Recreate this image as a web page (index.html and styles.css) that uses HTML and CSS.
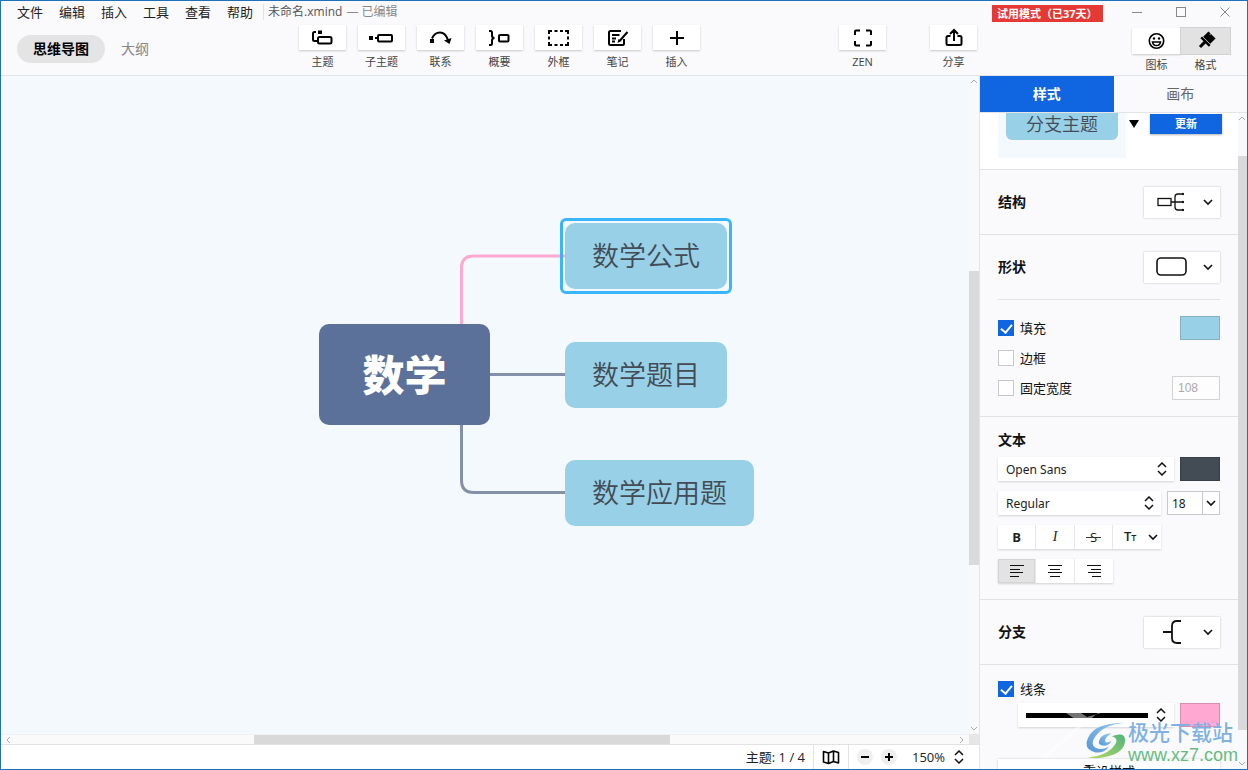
FILE: index.html
```html
<!DOCTYPE html>
<html lang="zh-CN">
<head>
<meta charset="utf-8">
<title>未命名.xmind</title>
<link rel="stylesheet" href="styles.css">
</head>
<body>
<div class="app">
  <header class="header">
    <div class="header-main">
      <div class="menubar">
        <nav class="menus">
          <button class="menu">文件</button>
          <button class="menu">编辑</button>
          <button class="menu">插入</button>
          <button class="menu">工具</button>
          <button class="menu">查看</button>
          <button class="menu">帮助</button>
        </nav>
        <div class="doc-title"><span>未命名.xmind</span><span class="doc-state">— 已编辑</span></div>
      </div>
      <div class="toolbar">
        <div class="view-tabs">
          <button class="view-tab view-tab-on">思维导图</button>
          <button class="view-tab">大纲</button>
        </div>
        <div class="tools">
          <button class="tool"><span class="tool-face"><svg class="icon" width="24" height="24" viewBox="0 0 24 24"><path d="M5 6H3.500Q2 6 2 7.500V13.500Q2 15 3.500 15H6" class="s2"/><rect x="7" y="11" width="13.500" height="6.500" rx="1.500" class="s2"/><rect x="7" y="4.500" width="4" height="3.500"/></svg></span><span>主题</span></button>
          <button class="tool"><span class="tool-face"><svg class="icon" width="24" height="24" viewBox="0 0 24 24"><rect x="-1" y="10" width="4" height="4"/><path d="M5 12h4" class="s2"/><rect x="8" y="9" width="14" height="6.500" rx="1" class="s2"/></svg></span><span>子主题</span></button>
          <button class="tool"><span class="tool-face"><svg class="icon" width="24" height="24" viewBox="0 0 24 24"><rect x="1" y="13" width="4" height="4"/><path d="M3 12.500Q5.500 6.500 11 6.500T19 14" class="s2"/><path d="M15 14.500L22.500 12l-2 6z"/></svg></span><span>联系</span></button>
          <button class="tool"><span class="tool-face"><svg class="icon" width="24" height="24" viewBox="0 0 24 24"><path d="M1 5h1.500Q4 5 4 6.500v3Q4 12 6.500 12 4 12 4 14.500v3Q4 19 2.500 19H1" class="s2"/><rect x="11" y="9" width="9.500" height="6.500" rx="1" class="s2"/></svg></span><span>概要</span></button>
          <button class="tool"><span class="tool-face"><svg class="icon" width="24" height="24" viewBox="0 0 24 24"><path d="M2 8V5h3M7.500 5h3M13 5h3M18 5h3v3M21 10.500v3M21 16v3h-3M16 19h-3M10.500 19h-3M5 19H2v-3M2 13.500v-3" class="s2"/></svg></span><span>外框</span></button>
          <button class="tool"><span class="tool-face"><svg class="icon" width="24" height="24" viewBox="0 0 24 24"><path d="M15 5H4.500Q3 5 3 6.500v11Q3 19 4.500 19h12q1.500 0 1.500-1.500V13M6 9h7.500M6 12.500h4M6 15.500h3" class="s2"/><path d="M21.500 6l-7.500 8.500" class="s2"/><path d="M11.500 17l1-4 3 2z"/></svg></span><span>笔记</span></button>
          <button class="tool"><span class="tool-face"><svg class="icon" width="24" height="24" viewBox="0 0 24 24"><path d="M12 5v14M5 12h14" class="s2"/></svg></span><span>插入</span></button>
        </div>
        <div class="tools tools-end">
          <button class="tool"><span class="tool-face"><svg class="icon" width="24" height="24" viewBox="0 0 24 24"><path d="M4 9V5.500Q4 4.500 5 4.500h4M15 4.500h4q1 0 1 1V9M20 15v3.500q0 1-1 1h-4M9 19.500H5q-1 0-1-1V15" class="s2"/></svg></span><span>ZEN</span></button>
          <button class="tool"><span class="tool-face"><svg class="icon" width="24" height="24" viewBox="0 0 24 24"><path d="M8.500 10H6q-1.500 0-1.500 1.500v6Q4.500 19 6 19h12q1.500 0 1.500-1.500v-6Q19.500 10 18 10h-2.500M12 15V5M8 8l4-4 4 4" class="s2"/></svg></span><span>分享</span></button>
        </div>
      </div>
    </div>
    <div class="header-side">
      <div class="window-row">
        <span class="trial">试用模式（已37天）</span>
        <div class="window-buttons">
          <button class="window-button" aria-label="最小化"><svg class="win-icon" width="12" height="12"><path d="M1 6.500h10"/></svg></button>
          <button class="window-button" aria-label="最大化"><svg class="win-icon" width="12" height="12"><rect x="1.500" y="1.500" width="9" height="9"/></svg></button>
          <button class="window-button" aria-label="关闭"><svg class="win-icon" width="12" height="12"><path d="M1.500 1.500l9 9M10.500 1.500l-9 9"/></svg></button>
        </div>
      </div>
      <div class="panel-switch">
        <button class="tool panel-tool"><span class="tool-face"><svg class="icon" width="20" height="20" viewBox="0 0 20 20"><circle class="face" cx="9.500" cy="10" r="7.200"/><circle cx="7" cy="7.500" r="1.200"/><circle cx="12" cy="7.500" r="1.200"/><path class="face" d="M5.500 11h8q-.500 3.500-4 3.500t-4-3.500z"/></svg></span><span>图标</span></button>
        <button class="tool panel-tool panel-tool-on"><span class="tool-face"><svg class="icon" width="20" height="20" viewBox="0 0 20 20"><g transform="rotate(45 10 10)"><path d="M5 1.500h3v2l1-2h6V9H5z"/><path d="M4 9.500h12V12h-4.500v6.500h-3V12H4z"/></g></svg></span><span>格式</span></button>
      </div>
    </div>
  </header>

  <div class="workspace">
    <main class="editor">
      <div class="canvas-area">
        <div class="canvas">
          <svg class="links" width="600" height="440">
            <path class="link" d="M489 298.500H565"/>
            <path class="link" d="M460.500 348V404q0 12.500 12 12.500H565"/>
            <path class="link link-pink" d="M460.500 249V192q0-12 12-12H565"/>
          </svg>
          <div class="node node-root">数学</div>
          <div class="selection"></div>
          <div class="node node-a">数学公式</div>
          <div class="node node-b">数学题目</div>
          <div class="node node-c">数学应用题</div>
        </div>
        <div class="vbar">
          <svg class="arrow" width="10" height="10"><path d="M2 7l3-3 3 3"/></svg>
          <div class="vtrack"><div class="vthumb"></div></div>
          <svg class="arrow" width="10" height="10"><path d="M2 3l3 3 3-3"/></svg>
        </div>
        <div class="hbar">
          <svg class="arrow" width="16" height="10"><path d="M9 2L6 5l3 3"/></svg>
          <div class="htrack"><div class="hthumb"></div></div>
          <svg class="arrow" width="16" height="10"><path d="M7 2l3 3-3 3"/></svg>
        </div>
        <div class="corner"></div>
      </div>
      <footer class="status">
        <span class="status-count">主题: 1 / 4</span>
        <button class="status-map" aria-label="导航图"><svg class="icon" width="18" height="16"><path class="map" d="M1.500 2.500l5 1.500 5-2 5 1.500v10.500l-5-1.500-5 2-5-1.500zM6.500 4v10.500M11.500 2v10.500"/></svg></button>
        <div class="status-zoom">
          <button class="round" aria-label="缩小"><svg class="icon" width="10" height="10"><path d="M1 5h8" class="s2"/></svg></button>
          <button class="round" aria-label="放大"><svg class="icon" width="10" height="10"><path d="M1 5h8M5 1v8" class="s2"/></svg></button>
          <div class="picker zoom-picker">
            <select class="picker-field" aria-label="缩放"><option>150%</option></select>
            <svg class="updown" width="10" height="14"><path d="M1 5l4-4 4 4M1 9l4 4 4-4"/></svg>
          </div>
        </div>
      </footer>
    </main>

    <aside class="sidebar">
      <div class="side-tabs">
        <button class="side-tab side-tab-on">样式</button>
        <button class="side-tab">画布</button>
      </div>
      <div class="side-body">
        <div class="side-content">
          <section class="preview">
            <div class="preview-card"><div class="preview-topic">分支主题</div></div>
            <button class="preview-more" aria-label="更多样式"><svg width="10" height="8"><path d="M0 0h10L5 8z"/></svg></button>
            <button class="update">更新</button>
          </section>
          <section class="row-section">
            <h3 class="heading">结构</h3>
            <button class="shape-button" aria-label="结构"><svg class="thin" width="28" height="20"><rect x="2" y="6.500" width="13" height="7"/><path d="M15 10h12M27 2h-5q-3 0-3 3v10q0 3 3 3h5"/><circle class="dot" cx="27" cy="2" r=".500"/><circle class="dot" cx="27" cy="10" r=".500"/><circle class="dot" cx="27" cy="18" r=".500"/></svg><svg class="chevron" width="10" height="8"><path d="M1 2l4 4 4-4"/></svg></button>
          </section>
          <section class="shape-section">
            <div class="shape-row">
              <h3 class="heading">形状</h3>
              <button class="shape-button" aria-label="形状"><svg class="thin" width="32" height="20"><rect x="1" y="1" width="29" height="17" rx="4"/></svg><svg class="chevron" width="10" height="8"><path d="M1 2l4 4 4-4"/></svg></button>
            </div>
            <div class="checks">
              <div class="check-row"><label class="check"><input type="checkbox" class="box" checked>填充</label><button class="swatch swatch-blue" aria-label="填充颜色"></button></div>
              <div class="check-row"><label class="check"><input type="checkbox" class="box">边框</label></div>
              <div class="check-row"><label class="check"><input type="checkbox" class="box">固定宽度</label><input class="width-field" value="108" aria-label="宽度" disabled></div>
            </div>
          </section>
          <section class="text-section">
            <h3 class="heading">文本</h3>
            <div class="field-row">
              <div class="picker picker-card"><select class="picker-field" aria-label="字体"><option>Open Sans</option></select><svg class="updown" width="10" height="14"><path d="M1 5l4-4 4 4M1 9l4 4 4-4"/></svg></div>
              <button class="swatch swatch-dark" aria-label="文字颜色"></button>
            </div>
            <div class="field-row">
              <div class="picker picker-card"><select class="picker-field" aria-label="字重"><option>Regular</option></select><svg class="updown" width="10" height="14"><path d="M1 5l4-4 4 4M1 9l4 4 4-4"/></svg></div>
              <div class="size-box"><input class="size-field" value="18" aria-label="字号"><button class="size-more" aria-label="选择字号"><svg class="chevron" width="10" height="8"><path d="M1 2l4 4 4-4"/></svg></button></div>
            </div>
            <div class="segments">
              <button class="segment bold">B</button><button class="segment italic">I</button><button class="segment strike">S</button><button class="segment segment-wide"><span class="caps">T<small class="caps-small">T</small></span><svg class="chevron" width="10" height="8"><path d="M1 2l4 4 4-4"/></svg></button>
            </div>
            <div class="segments">
              <button class="segment segment-on" aria-label="左对齐"><svg class="lines" width="16" height="12"><path d="M1 .500h14M1 4.500h10M1 7.500h13M1 11.500h9"/></svg></button><button class="segment" aria-label="居中"><svg class="lines" width="16" height="12"><path d="M1 .500h14M3 4.500h10M1 7.500h14M3 11.500h10"/></svg></button><button class="segment" aria-label="右对齐"><svg class="lines" width="16" height="12"><path d="M1 .500h14M5 4.500h10M2 7.500h13M6 11.500h9"/></svg></button>
            </div>
          </section>
          <section class="row-section">
            <h3 class="heading">分支</h3>
            <button class="shape-button" aria-label="分支"><svg class="thin branch-icon" width="28" height="24"><path d="M7 12h9M25 1h-4q-5 0-5 5v12q0 5 5 5h4"/></svg><svg class="chevron" width="10" height="8"><path d="M1 2l4 4 4-4"/></svg></button>
          </section>
          <section class="line-section">
            <label class="check"><input type="checkbox" class="box" checked>线条</label>
            <div class="line-row">
              <button class="line-picker" aria-label="线条粗细"><span class="line-sample"></span><svg class="updown" width="10" height="14"><path d="M1 5l4-4 4 4M1 9l4 4 4-4"/></svg></button>
              <button class="swatch swatch-pink" aria-label="线条颜色"></button>
            </div>
            <button class="reset">重设样式</button>
          </section>
        </div>
        <div class="side-bar">
          <svg class="arrow" width="9" height="10"><path d="M1 7l3-3 3 3"/></svg>
          <div class="side-track"><div class="side-thumb"></div></div>
          <svg class="arrow" width="9" height="10"><path d="M1 3l3 3 3-3"/></svg>
        </div>
      </div>
    </aside>
  </div>

  <div class="watermark">
    <svg class="mark-streak" width="70" height="50"><path d="M22 0h15l9 6L67 0h-8L8 44 0 48 40 12z"/></svg>
    <svg class="mark-logo" width="42" height="40" viewBox="0 0 44 40">
      <defs>
        <linearGradient id="sky" x1="0" y1="1" x2="1" y2="0"><stop offset="0" stop-color="#3b86d0"/><stop offset="1" stop-color="#8cc4ec"/></linearGradient>
        <linearGradient id="leaf" x1="0" y1="1" x2="1" y2="0"><stop offset="0" stop-color="#a9d34c"/><stop offset="1" stop-color="#35a864"/></linearGradient>
      </defs>
      <path fill="url(#sky)" d="M42 1Q10 1 3 17q-5 12 8 15 9 1 14-6-8 4-14 1-6-4 0-12Q20 3 42 1z"/>
      <path fill="url(#sky)" d="M28 12q-10 0-13 7-2 6 5 6 5 0 8-5-7 3-7 0 0-4 7-8z"/>
      <path fill="url(#leaf)" d="M28 15q14-5 14 4 0 14-22 18-10 2-17 0 21-1 29-14 3-6-4-8z"/>
    </svg>
    <div class="mark-text"><span class="mark-name">极光下载站</span><span class="mark-url">www.xz7.com</span></div>
  </div>
</div>
</body>
</html>
```
FILE: styles.css
```css
* { box-sizing: border-box; }

body {
  margin: 0;
  font: 13px/18px "Open Sans", "Noto Sans CJK SC", sans-serif;
  color: #222;
}

button, input, select {
  font: inherit;
  color: inherit;
  margin: 0;
  padding: 0;
  border: 0;
  background: none;
}

svg { display: block; flex: none; }

.icon { fill: #000; overflow: visible; }
.s2 { fill: none; stroke: #000; stroke-width: 2; }
.face { fill: none; stroke: #000; stroke-width: 1.600; }
.map { fill: none; stroke: #000; stroke-width: 1.600; stroke-linejoin: round; }

.app {
  position: relative;
  display: flex;
  flex-direction: column;
  height: 100vh;
  border: 1px solid #1f72b8;
  background: #fafafd;
  overflow: hidden;
}

/* Header */
.header {
  display: flex;
  flex: none;
  border-bottom: 1px solid #dfe5ea;
}
.header-main { flex: 1; min-width: 0; }
.header-side { flex: none; width: 268px; }

.menubar {
  display: flex;
  align-items: center;
  height: 22px;
  padding-left: 16px;
}
.menus { display: flex; gap: 16px; padding-right: 10px; }
.doc-title {
  display: flex;
  gap: 4px;
  padding-left: 4px;
  border-left: 1px solid #e2e2e2;
  font-size: 12px;
  line-height: 16px;
  color: #555;
}
.doc-state { color: #888; }

.toolbar { display: flex; align-items: flex-start; padding: 2px 2px 4px 16px; }
.view-tabs {
  display: flex;
  align-items: center;
  flex: none;
  width: 282px;
  padding-top: 10px;
}
.view-tab {
  height: 28px;
  padding: 0 16px;
  border-radius: 14px;
  font-size: 14px;
  color: #888;
}
.view-tab-on {
  background: #e4e4e5;
  color: #000;
  font-weight: 700;
}
.tools { display: flex; gap: 12px; }
.tools-end { gap: 44px; margin-left: auto; }
.tool {
  display: flex;
  flex-direction: column;
  align-items: center;
  gap: 3px;
  width: 47px;
  font-size: 11px;
  color: #444;
}
.tool-face {
  display: flex;
  align-items: center;
  justify-content: center;
  width: 100%;
  height: 25px;
  background: #fff;
  box-shadow: 0 1px 2px rgba(0, 0, 0, .2);
}

.window-row { display: flex; height: 22px; padding: 4px 16px 0 13px; }
.trial {
  height: 17px;
  padding-left: 5px;
  width: 111px;
  background: #e53935;
  color: #fff;
  font-size: 11px;
  font-weight: 700;
  line-height: 17px;
  white-space: nowrap;
  overflow: hidden;
}
.window-buttons { display: flex; gap: 32px; margin-left: auto; height: 14px; align-items: center; }
.win-icon { fill: none; stroke: #888; }

.panel-switch { display: flex; justify-content: flex-end; padding: 5px 17px 0 0; }
.panel-tool { width: 49px; gap: 2px; }
.panel-tool .tool-face { height: 26px; }
.panel-tool-on .tool-face { background: #e2e2e2; box-shadow: 0 0 0 1px #d2d2d2; }

/* Workspace */
.workspace { display: flex; flex: 1; min-height: 0; }
.editor { display: flex; flex-direction: column; flex: 1; min-width: 0; }
.canvas-area {
  display: grid;
  grid-template: minmax(0, 1fr) 10px / minmax(0, 1fr) 10px;
  flex: 1;
  min-height: 0;
}
.canvas { position: relative; overflow: hidden; background: #f4f9fe; }

.links { position: absolute; left: 0; top: 0; }
.link { fill: none; stroke: #8390a8; stroke-width: 3; }
.link-pink { stroke: #ffa8d2; }
.node {
  position: absolute;
  left: 564px;
  width: 162px;
  height: 66px;
  border-radius: 10px;
  background: #97d0e7;
  color: #434b54;
  font-family: "Noto Sans CJK SC", sans-serif;
  font-size: 27px;
  font-weight: 350;
  line-height: 64px;
  text-align: center;
}
.node-root {
  left: 318px;
  top: 248px;
  width: 171px;
  height: 101px;
  background: #5b7199;
  color: #fff;
  font-size: 42px;
  font-weight: 900;
  line-height: 98px;
}
.node-a { top: 147px; }
.node-b { top: 266px; }
.node-c { top: 384px; width: 189px; }
.selection {
  position: absolute;
  left: 559px;
  top: 142px;
  width: 172px;
  height: 76px;
  border: 3px solid #39b5fb;
  border-radius: 6px;
}

.arrow { fill: none; stroke: #aaa; }
.vbar, .side-bar { display: flex; flex-direction: column; background: #f8f9fb; }
.vtrack, .side-track { flex: 1; min-height: 0; }
.vtrack { padding-top: 185px; }
.vthumb { height: 294px; background: #dadada; }
.hbar { display: flex; background: #fafafa; border-top: 1px solid #eef2f5; }
.htrack { flex: 1; padding-left: 237px; }
.hthumb { width: 416px; height: 10px; background: #d9d9d9; }
.corner { background: #e6e6e6; }

.status {
  display: flex;
  align-items: stretch;
  flex: none;
  height: 25px;
  border-top: 1px solid #e2e2e2;
  background: #fff;
  justify-content: flex-end;
}
.status-count { padding: 3px 8px 0 0; }
.status-map { padding: 0 8px; border: 1px solid #e2e2e2; border-width: 0 1px; }
.status-zoom { display: flex; align-items: center; gap: 8px; padding: 0 8px; }
.round {
  display: flex;
  align-items: center;
  justify-content: center;
  width: 16px;
  height: 16px;
  border-radius: 50%;
  background: #efefef;
}

/* Pickers */
.picker { display: flex; align-items: center; justify-content: flex-end; position: relative; }
.picker .updown { position: absolute; right: 7px; pointer-events: none; }
.picker-field { appearance: none; width: 100%; height: 24px; outline: 0; }
.picker-card { flex: 1; background: #fff; box-shadow: 0 1px 2px rgba(0, 0, 0, .16); }
.picker-card .picker-field { padding-left: 8px; font: 12px "Noto Sans", sans-serif; }
.zoom-picker { width: 60px; margin-left: 6px; }
.zoom-picker .picker-field { padding-left: 1px; }
.updown { fill: none; stroke: #111; stroke-width: 1.500; }
.chevron { fill: none; stroke: #111; stroke-width: 1.600; }

/* Sidebar */
.sidebar {
  display: flex;
  flex-direction: column;
  flex: none;
  width: 268px;
  border-left: 1px solid #e2e4e8;
}
.side-tabs { display: flex; flex: none; height: 37px; border-bottom: 1px solid #e2e4e8; }
.side-tab { flex: 1; font-size: 14px; color: #666; }
.side-tab-on { background: #1065e0; color: #fff; font-weight: 700; }
.side-body { display: flex; flex: 1; min-height: 0; }
.side-content { flex: 1; min-width: 0; overflow: hidden; }
.side-bar { width: 9px; }
.side-track { padding-top: 33px; }
.side-thumb { height: 574px; background: #d9d9dc; }

.preview {
  display: flex;
  align-items: flex-end;
  height: 57px;
  padding: 0 16px 11px 18px;
  border-bottom: 1px solid #e2e2e2;
  background: #fff;
  overflow: hidden;
}
.preview-card { width: 128px; padding: 18px 8px; background: #f4f9fe; }
.preview-topic {
  height: 32px;
  border-radius: 6px;
  background: #97d0e7;
  color: #434b54;
  font-family: "Noto Sans CJK SC", sans-serif;
  font-size: 18px;
  font-weight: 350;
  line-height: 30px;
  text-align: center;
}
.preview-more { align-self: flex-start; padding: 7px 0 0 3px; }
.update {
  align-self: flex-start;
  width: 72px;
  height: 20px;
  margin: 1px 0 0 auto;
  background: #1065e0;
  box-shadow: 0 1px 2px rgba(0, 0, 0, .3);
  color: #fff;
  font-size: 11px;
  font-weight: 700;
}

.heading { margin: 0; font-size: 14px; line-height: 20px; color: #111; }
.row-section, .shape-row { display: flex; align-items: center; justify-content: space-between; }
.row-section { height: 65px; padding: 0 18px; border-bottom: 1px solid #e2e2e2; }
.shape-button {
  display: flex;
  align-items: center;
  justify-content: space-between;
  width: 76px;
  height: 31px;
  padding: 0 7px 0 12px;
  background: #fff;
  box-shadow: 0 0 2px rgba(0, 0, 0, .25);
}
.thin { fill: none; stroke: #111; stroke-width: 1.600; }
.row-section .thin { stroke-width: 1.300; }
.row-section .branch-icon { stroke-width: 1.800; }
.dot { fill: #111; }

.shape-section { padding: 0 18px 13px; border-bottom: 1px solid #e2e2e2; }
.shape-row { height: 65px; border-bottom: 1px solid #e2e2e2; }
.checks { padding-top: 13px; }
.check-row { display: flex; align-items: center; justify-content: space-between; height: 30px; }
.check { display: flex; align-items: center; gap: 6px; color: #111; }
.box {
  appearance: none;
  display: flex;
  align-items: center;
  justify-content: center;
  flex: none;
  width: 16px;
  height: 16px;
  border: 1px solid #c8c8cc;
  background: #fff;
}
.box:checked { border-color: #1065e0; background: #1065e0; }
.box:checked::after {
  content: "";
  width: 5px;
  height: 9px;
  margin-bottom: 2px;
  border: solid #fff;
  border-width: 0 2px 2px 0;
  transform: rotate(40deg);
}
.swatch { flex: none; width: 40px; height: 24px; border: 1px solid rgba(0, 0, 0, .15); }
.swatch-blue { background: #97d0e7; }
.swatch-dark { background: #434b54; }
.swatch-pink { background: #ffa8d2; }
.width-field {
  width: 48px;
  height: 24px;
  padding-left: 5px;
  border: 1px solid #d2d2d4;
  background: #fdfdfe;
  color: #aaa;
  font: 12px "Liberation Sans", sans-serif;
}

.text-section {
  display: flex;
  flex-direction: column;
  gap: 10px;
  padding: 13px 18px 16px;
  border-bottom: 1px solid #e2e2e2;
}
.text-section .heading { margin-bottom: -3px; }
.field-row { display: flex; gap: 6px; }
.size-box { display: flex; width: 53px; height: 24px; border: 1px solid #c8c8c8; background: #fff; }
.size-field { flex: 1; min-width: 0; padding-left: 4px; font: 12px "Noto Sans", sans-serif; }
.size-more { width: 17px; padding-left: 3px; border-left: 1px solid #c8c8c8; }
.segments { display: flex; align-self: flex-start; background: #fff; box-shadow: 0 1px 2px rgba(0, 0, 0, .16); }
.segment {
  display: flex;
  align-items: center;
  justify-content: center;
  width: 38px;
  height: 24px;
  border-right: 1px solid #e8e8e8;
  font-size: 13px;
}
.segment:nth-child(2) { width: 39px; }
.segment:last-child { border-right: 0; }
.segment-wide { justify-content: space-between; width: 48px; padding: 0 3px 0 11px; }
.segment-on { background: #e3e3e4; box-shadow: inset 0 0 0 1px #d4d4d4; }
.bold { font-weight: 700; }
.italic { font-family: "Liberation Serif", serif; font-size: 14px; font-style: italic; }
.strike { position: relative; }
.strike::after {
  content: "";
  position: absolute;
  left: 11px;
  right: 11px;
  top: 12px;
  height: 1px;
  background: #333;
}
.caps { font-weight: 600; }
.caps-small { font-size: 9px; }
.lines { fill: none; stroke: #111; }

.line-section { padding: 15px 18px 0; }
.line-row { display: flex; gap: 6px; padding: 5px 0 32px 20px; }
.line-picker {
  display: flex;
  align-items: center;
  flex: 1;
  gap: 8px;
  height: 24px;
  padding: 0 8px;
  background: #fff;
  box-shadow: 0 1px 2px rgba(0, 0, 0, .16);
}
.line-sample { flex: 1; height: 5px; background: #000; }
.reset {
  display: block;
  width: 100%;
  height: 24px;
  background: #fff;
  box-shadow: 0 0 2px rgba(0, 0, 0, .2);
  color: #111;
}

/* Watermark */
.watermark {
  position: absolute;
  right: 9px;
  bottom: 4px;
  display: flex;
  align-items: flex-start;
  pointer-events: none;
}
.mark-streak { position: absolute; left: -44px; top: -10px; fill: rgba(255, 255, 255, .45); }
.mark-logo { opacity: .85; }
.mark-text {
  display: flex;
  flex-direction: column;
  padding-left: 1px;
  font-family: "Liberation Sans", "Noto Sans CJK SC", sans-serif;
}
.mark-name { font-size: 21px; line-height: 24px; color: #7fb2e2; font-weight: 500; }
.mark-url { font-size: 18px; line-height: 20px; color: #63bd7d; }
```
